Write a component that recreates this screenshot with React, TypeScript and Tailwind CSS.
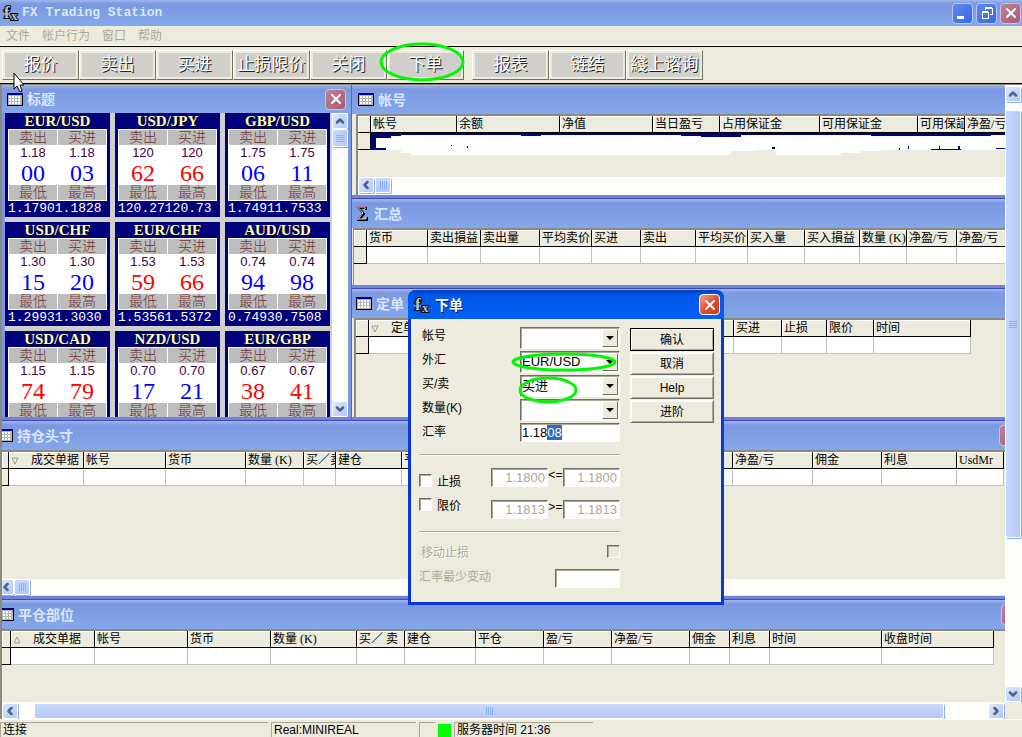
import React, { useEffect, useRef } from "react";
import { ChevronDown, ChevronLeft, ChevronRight, ChevronUp, X } from "lucide-react";

type Column = { label: string; width: number; sort?: "up" | "down" };

const accountColumns: Column[] = [
  { label: "", width: 13 },
  { label: "帐号", width: 86 },
  { label: "余额", width: 103 },
  { label: "净值", width: 93 },
  { label: "当日盈亏", width: 67 },
  { label: "占用保证金", width: 100 },
  { label: "可用保证金", width: 98 },
  { label: "可用保証金", width: 47 },
  { label: "净盈/亏", width: 60 },
];

const summaryColumns: Column[] = [
  { label: "", width: 13 },
  { label: "货币", width: 61 },
  { label: "卖出損益", width: 53 },
  { label: "卖出量", width: 59 },
  { label: "平均卖价", width: 52 },
  { label: "买进", width: 49 },
  { label: "卖出", width: 55 },
  { label: "平均买价", width: 52 },
  { label: "买入量", width: 57 },
  { label: "买入損益", width: 55 },
  { label: "数量 (K)", width: 47 },
  { label: "净盈/亏", width: 50 },
  { label: "净盈/亏", width: 60 },
];

const orderColumns: Column[] = [
  { label: "", width: 13 },
  { label: "定单", width: 365, sort: "down" },
  { label: "买进", width: 48 },
  { label: "止损", width: 45 },
  { label: "限价", width: 47 },
  { label: "时间", width: 97 },
];

const openColumns: Column[] = [
  { label: "", width: 7 },
  { label: "成交单据", width: 75, sort: "down" },
  { label: "帐号", width: 82 },
  { label: "货币", width: 80 },
  { label: "数量 (K)", width: 58 },
  { label: "买／卖", width: 32 },
  { label: "建仓", width: 66 },
  { label: "平仓", width: 331 },
  { label: "净盈/亏", width: 80 },
  { label: "佣金", width: 69 },
  { label: "利息", width: 75 },
  { label: "UsdMr", width: 47 },
];

const closedColumns: Column[] = [
  { label: "", width: 9 },
  { label: "成交单据", width: 84, sort: "up" },
  { label: "帐号", width: 93 },
  { label: "货币", width: 83 },
  { label: "数量 (K)", width: 86 },
  { label: "买／ 卖", width: 48 },
  { label: "建仓", width: 71 },
  { label: "平仓", width: 68 },
  { label: "盈/亏", width: 68 },
  { label: "净盈/亏", width: 78 },
  { label: "佣金", width: 40 },
  { label: "利息", width: 40 },
  { label: "时间", width: 112 },
  { label: "收盘时间", width: 112 },
];

const quotes = [
  { pair: "EUR/USD", base: "1.18", sell: "00", buy: "03", low: "1.1790", high: "1.1828", up: true },
  { pair: "USD/JPY", base: "120", sell: "62", buy: "66", low: "120.27", high: "120.73", up: false },
  { pair: "GBP/USD", base: "1.75", sell: "06", buy: "11", low: "1.7491", high: "1.7533", up: true },
  { pair: "USD/CHF", base: "1.30", sell: "15", buy: "20", low: "1.2993", high: "1.3030", up: true },
  { pair: "EUR/CHF", base: "1.53", sell: "59", buy: "66", low: "1.5356", high: "1.5372", up: false },
  { pair: "AUD/USD", base: "0.74", sell: "94", buy: "98", low: "0.7493", high: "0.7508", up: true },
  { pair: "USD/CAD", base: "1.15", sell: "74", buy: "79", low: "", high: "", up: false },
  { pair: "NZD/USD", base: "0.70", sell: "17", buy: "21", low: "", high: "", up: true },
  { pair: "EUR/GBP", base: "0.67", sell: "38", buy: "41", low: "", high: "", up: false },
];

const sunken =
  "border border-t-[#716f64] border-l-[#716f64] border-r-white border-b-white bg-white shadow-[inset_1px_1px_0_#aca899]";

const FxLogo = () => (
  <svg className="h-[18px] w-[18px] shrink-0" viewBox="0 0 18 18" aria-hidden="true">
    <g
      fill="#c0c0c0"
      stroke="#000"
      strokeWidth="2"
      paintOrder="stroke"
      fontFamily="Liberation Serif, serif"
      fontWeight="700"
    >
      <text x="2" y="14" fontSize="17">f</text>
      <text x="9" y="16" fontSize="13">x</text>
    </g>
    <path d="M1 10h7" stroke="#c0c0c0" />
  </svg>
);

const GridIcon = () => (
  <svg className="h-[13px] w-4 shrink-0" viewBox="0 0 16 13" shapeRendering="crispEdges" aria-hidden="true">
    <rect width="16" height="13" fill="#000" />
    <rect width="16" height="2" fill="#00007b" />
    <rect x="1" y="2" width="14" height="10" fill="#b5b5b5" />
    {[2, 5, 8, 11].map((x) =>
      [3, 6, 9].map((y) => <rect key={`${x}-${y}`} x={x} y={y} width="2" height="2" fill="#fff" />)
    )}
  </svg>
);

const SigmaIcon = () => (
  <svg className="h-4 w-3 shrink-0" viewBox="0 0 12 16" fill="none" aria-hidden="true">
    <path d="M10 4V2H3l5 6-5 6h8v-3" stroke="#000" strokeWidth="2" />
    <path d="M9 3V1H2l5 6-5 6h8v-2" stroke="#d8d8d8" strokeWidth="1" />
    <path d="M10 1H1l1 1M6 8l-5 5" stroke="#e8316a" strokeWidth="1" />
  </svg>
);

const arrows = { up: ChevronUp, down: ChevronDown, left: ChevronLeft, right: ChevronRight };

const ArrowButton = ({ dir }: { dir: keyof typeof arrows }) => {
  const Icon = arrows[dir];
  return (
    <button
      aria-label={`scroll ${dir}`}
      className="flex h-4 w-4 shrink-0 items-center justify-center rounded-xs border border-white bg-linear-to-br from-[#dfe8ff] to-[#b0c8f7] shadow-[1px_1px_0_#8fb0e8]"
    >
      <Icon className="h-3 w-3 shrink-0 text-[#4d6185]" strokeWidth={5} />
    </button>
  );
};

const Thumb = ({ vertical, className }: { vertical?: boolean; className: string }) => (
  <div
    className={`flex items-center justify-center rounded-xs border border-white shadow-[1px_1px_0_#8fb0e8] ${
      vertical
        ? "w-4 bg-linear-to-r from-[#c8d8fd] to-[#b5c9f8]"
        : "h-4 bg-linear-to-b from-[#c8d8fd] to-[#b5c9f8]"
    } ${className}`}
  >
    <div className={`flex gap-px ${vertical ? "flex-col" : ""}`}>
      {[0, 1, 2, 3].map((i) => (
        <span key={i} className={`bg-[#8cb0f8] ${vertical ? "h-px w-2" : "h-2 w-px"}`} />
      ))}
    </div>
  </div>
);

const CloseButton = ({ active, className = "" }: { active?: boolean; className?: string }) => (
  <button
    aria-label="关闭窗口"
    className={`flex h-[21px] w-[21px] shrink-0 items-center justify-center rounded-sm border ${
      active
        ? "border-white bg-linear-to-br from-[#f0a088] via-[#e05030] to-[#c83810]"
        : "border-[#d0c0e8] bg-linear-to-br from-[#c08098] to-[#a85c74]"
    } ${className}`}
  >
    <X className="h-4 w-4 text-white" strokeWidth={3} />
  </button>
);

const Pane = ({
  title,
  icon,
  children,
  className = "",
  barClass = "",
  close,
}: {
  title: string;
  icon: React.ReactNode;
  children: React.ReactNode;
  className?: string;
  barClass?: string;
  close?: React.ReactNode;
}) => (
  <section className={`flex flex-col overflow-hidden ${className}`}>
    <div
      className={`flex h-[29px] shrink-0 items-center overflow-hidden bg-linear-to-b from-[#a0b8f0] via-[#7b98e0] via-15% to-[#84a8ea] ${barClass}`}
    >
      {icon}
      <h2 className="grow text-sm leading-5 font-bold text-[#dbe6fd]">{title}</h2>
      {close}
    </div>
    {children}
    <div className="h-1 shrink-0 border-b border-[#4048b8] bg-[#6f83da]" />
  </section>
);

const DataTable = ({ columns, selected }: { columns: Column[]; selected?: boolean }) => (
  <table
    className="table-fixed border-separate border-spacing-0 font-['Liberation_Serif','Noto_Sans_CJK_SC',sans-serif] text-xs"
    style={{ width: columns.reduce((sum, c) => sum + c.width, 0) }}
  >
    <colgroup>
      {columns.map((c, i) => (
        <col key={i} style={{ width: c.width }} />
      ))}
    </colgroup>
    <thead>
      <tr>
        {columns.map((c, i) => (
          <th
            key={i}
            className="h-[17px] overflow-hidden border-r border-b border-black bg-[#ecebde] p-0 pl-0.5 text-left leading-4 font-normal whitespace-nowrap shadow-[inset_1px_1px_0_#fff]"
          >
            {c.sort && (
              <svg className="mr-3 inline-block h-2 w-2" viewBox="0 0 8 8" fill="none" stroke="#9c9a8c" aria-hidden="true">
                <path d={c.sort === "down" ? "M1 1h6L4 7z" : "M1 7h6L4 1z"} />
              </svg>
            )}
            {c.label}
          </th>
        ))}
      </tr>
    </thead>
    <tbody>
      <tr>
        {columns.map((_, i) => (
          <td
            key={i}
            className={`h-[17px] border-r border-b p-0 ${
              i === 0
                ? "border-black bg-[#ecebde]"
                : selected
                  ? "border-[#00007b] bg-[#00007b]"
                  : "border-[#c0c0c0] bg-white"
            }`}
          />
        ))}
      </tr>
    </tbody>
  </table>
);

const QuoteCard = ({ quote }: { quote: (typeof quotes)[number] }) => (
  <article className="flex h-[104px] w-[105px] flex-col bg-[#00007b] px-[3px]">
    <h3 className="text-center font-['Liberation_Serif',serif] text-[15px] leading-4 font-bold text-[#ffffb5] [text-shadow:1px_1px_0_#000]">
      {quote.pair}
    </h3>
    <div className="grid grid-cols-2 gap-x-px border border-white bg-white text-center">
      <span className="h-[15px] bg-[#bdbdbd] text-sm leading-[15px] font-light text-[#6b3131]">卖出</span>
      <span className="h-[15px] bg-[#bdbdbd] text-sm leading-[15px] font-light text-[#6b3131]">买进</span>
      <span className="text-[13px] leading-4 text-[#420042]">{quote.base}</span>
      <span className="text-[13px] leading-4 text-[#420042]">{quote.base}</span>
      {[quote.sell, quote.buy].map((value, i) => (
        <span
          key={i}
          className={`font-['Liberation_Serif',serif] text-2xl leading-6 ${quote.up ? "text-[#0000ff]" : "text-[#ff0000]"}`}
        >
          {value}
        </span>
      ))}
      <span className="h-[15px] bg-[#bdbdbd] text-sm leading-[15px] font-light text-[#6b3131]">最低</span>
      <span className="h-[15px] bg-[#bdbdbd] text-sm leading-[15px] font-light text-[#6b3131]">最高</span>
    </div>
    <div className="flex font-['Liberation_Mono',monospace] text-[13px] leading-4 text-white">
      <span>{quote.low}</span>
      <span>{quote.high}</span>
    </div>
  </article>
);

const ToolButton = ({ label, className = "" }: { label: string; className?: string }) => (
  <button
    className={`h-[30px] w-[77px] shrink-0 border border-t-white border-r-[#716f64] border-b-[#716f64] border-l-white bg-[#ecebde] p-0.5 ${className}`}
  >
    <span className="flex h-full items-center justify-center bg-[#d0cfcb] text-[17px] leading-6 whitespace-nowrap text-white [text-shadow:1px_1px_0_#222]">
      {label}
    </span>
  </button>
);

const DialogSelect = ({ id, label, value }: { id: string; label: string; value: string }) => (
  <div className="flex h-6 justify-between">
    <label htmlFor={id} className="pl-[3px] leading-[18px]">{label}</label>
    <div className={`grid h-[22px] w-[100px] grid-cols-1 p-px ${sunken}`}>
      <select id={id} defaultValue={value} className="col-start-1 row-start-1 w-full appearance-none text-[13px] outline-none">
        <option value={value}>{value}</option>
      </select>
      <span className="pointer-events-none col-start-1 row-start-1 flex w-4 items-center justify-center justify-self-end border border-t-white border-r-[#716f64] border-b-[#716f64] border-l-white bg-[#ecebde]">
        <span className="border-x-4 border-t-4 border-x-transparent border-t-black" />
      </span>
    </div>
  </div>
);

const LimitRow = ({ id, label, op, value }: { id: string; label: string; op: string; value: string }) => (
  <div className="flex h-8 items-start">
    <input
      id={id}
      type="checkbox"
      className={`h-[13px] w-[13px] appearance-none ${id === "stop" ? "mt-1.5" : "-mt-0.5"} ${sunken}`}
    />
    <label htmlFor={id} className={`ml-[5px] grow leading-5 ${id === "stop" ? "mt-1" : "-mt-1"}`}>{label}</label>
    <input aria-label={`${label}最小`} disabled defaultValue={value} className={`h-[19px] w-[57px] pr-0.5 text-right text-[13px] text-[#aca899] ${sunken}`} />
    <span className="w-[15px] text-center font-['Liberation_Mono',monospace] leading-4">{op}</span>
    <input aria-label={`${label}最大`} disabled defaultValue={value} className={`h-[19px] w-[57px] pr-0.5 text-right text-[13px] text-[#aca899] ${sunken}`} />
  </div>
);

const OrderDialog = () => {
  const rateRef = useRef<HTMLInputElement>(null);

  useEffect(() => {
    rateRef.current?.focus();
    rateRef.current?.setSelectionRange(4, 6);
  }, []);

  return (
    <div
      role="dialog"
      aria-label="下单"
      className="absolute top-[290px] left-[408px] w-[316px] rounded-t-lg border-[3px] border-t-0 border-[#0a36d8] bg-[#ecebde]"
    >
      <div className="-mx-[3px] flex h-[29px] items-center gap-1 rounded-t-lg bg-linear-to-b from-[#0040c0] via-[#0058e8] via-20% to-[#0060f8] pr-1 pl-[5px]">
        <FxLogo />
        <h2 className="grow text-sm leading-5 font-bold text-white [text-shadow:1px_1px_0_#002070]">下单</h2>
        <CloseButton active />
      </div>
      <form className="flex gap-2.5 pt-2 pr-[7px] pb-3.5 pl-2 text-xs">
        <div className="w-[201px] shrink-0">
          <DialogSelect id="account" label="帐号" value="" />
          <DialogSelect id="symbol" label="外汇" value="EUR/USD" />
          <DialogSelect id="side" label="买/卖" value="买进" />
          <DialogSelect id="amount" label="数量(K)" value="" />
          <div className="flex justify-between">
            <label htmlFor="rate" className="pl-[3px] leading-[18px]">汇率</label>
            <input
              ref={rateRef}
              id="rate"
              defaultValue="1.1808"
              className={`h-[19px] w-[100px] pl-px text-[13px] outline-none selection:bg-[#316ac5] selection:text-white ${sunken}`}
            />
          </div>
          <hr className="mt-3 mb-3 border-t border-b border-t-[#aca899] border-b-white" />
          <LimitRow id="stop" label="止损" op="<=" value="1.1800" />
          <LimitRow id="limit" label="限价" op=">=" value="1.1813" />
          <hr className="mb-3 -mt-px border-t border-b border-t-[#aca899] border-b-white" />
          <div className="flex h-6 items-start justify-between text-[#aca899]">
            <label htmlFor="trail" className="pl-0.5 leading-4 [text-shadow:1px_1px_0_#fff]">移动止损</label>
            <input id="trail" type="checkbox" disabled className={`h-[13px] w-[13px] appearance-none bg-[#ecebde]! ${sunken}`} />
          </div>
          <div className="flex justify-between text-[#aca899]">
            <label htmlFor="step" className="leading-4">汇率最少变动</label>
            <input id="step" disabled className={`h-[19px] w-[65px] ${sunken}`} />
          </div>
        </div>
        <div className="flex grow flex-col gap-px pt-px">
          {["确认", "取消", "Help", "进阶"].map((label, i) => (
            <button
              key={label}
              type="button"
              className={`h-[23px] border leading-5 shadow-[inset_1px_1px_0_#fff,inset_-1px_-1px_0_#aca899] ${
                i === 0 ? "border-black" : "border-t-white border-r-[#716f64] border-b-[#716f64] border-l-white"
              }`}
            >
              {label}
            </button>
          ))}
        </div>
      </form>
      <svg className="pointer-events-none absolute top-[60px] left-[98px] h-[56px] w-[112px]" viewBox="0 0 112 56" fill="none" stroke="#00f700" strokeWidth="3" aria-hidden="true">
        <ellipse cx="55" cy="12" rx="51" ry="8" />
        <ellipse cx="39" cy="40" rx="28" ry="12" />
      </svg>
    </div>
  );
};

const captionButton =
  "flex h-[21px] w-[21px] items-center justify-center rounded-sm border border-[#b8c8f4] bg-linear-to-br from-[#6088f0] to-[#3868e0]";

const App = () => {
  return (
    <div className="relative flex min-h-screen w-full flex-col overflow-hidden bg-[#ecebde] font-['Liberation_Sans','Noto_Sans_CJK_SC',sans-serif] text-xs text-black">
      <header className="flex h-[26px] items-center gap-0.5 bg-linear-to-b from-[#a0b8f0] via-[#7b98e0] via-15% to-[#84a8ea] pr-px pl-0.5">
        <FxLogo />
        <h1 className="grow font-['Liberation_Mono',monospace] text-[13px] font-bold text-[#dbe6fd]">FX Trading Station</h1>
        <button aria-label="最小化" className={captionButton}>
          <span className="mt-2 mr-1 h-[3px] w-[7px] bg-white" />
        </button>
        <button aria-label="还原" className={`${captionButton} mx-px`}>
          <svg className="h-3 w-3" viewBox="0 0 12 12" fill="none" stroke="#fff" shapeRendering="crispEdges" aria-hidden="true">
            <path d="M4 3V1h7v6H9" />
            <path d="M4 1h7" strokeWidth="2" />
            <path d="M1 5h6v6H1z" />
            <path d="M1 5h6" strokeWidth="2" />
          </svg>
        </button>
        <CloseButton />
      </header>
      <nav className="flex h-5 items-center gap-3 border-b border-white pl-1.5 text-[#aca899]">
        {["文件", "帐户行为", "窗口", "帮助"].map((item) => (
          <button key={item}>{item}</button>
        ))}
      </nav>
      <div className="flex h-[38px] items-center border-t border-b border-black pl-0.5">
        {["报价", "卖出", "买进", "止损限价", "关闭", "下单"].map((label) => (
          <ToolButton key={label} label={label} />
        ))}
        <ToolButton label="报表" className="ml-2" />
        <ToolButton label="链结" />
        <ToolButton label="綫上谘询" />
      </div>

      <main className="flex grow border-t border-l-2 border-[#8c8a7c]">
        <div className="flex min-w-0 grow flex-col">
          <div className="flex">
            <Pane
              title="标题"
              icon={<GridIcon />}
              barClass="h-7! gap-1 pl-[5px] pr-[5px]"
              close={<CloseButton />}
              className="w-[349px] shrink-0"
            >
              <div className="flex h-[304px] justify-between overflow-hidden border-x-[3px] border-[#7b98e0] bg-[#d0cfcb]">
                <div className="grid grid-cols-3 content-start gap-[5px]">
                  {quotes.map((quote) => (
                    <QuoteCard key={quote.pair} quote={quote} />
                  ))}
                </div>
                <div className="flex w-4 flex-col bg-[#fdfdfa]">
                  <ArrowButton dir="up" />
                  <Thumb vertical className="h-[18px]" />
                  <div className="mt-auto">
                    <ArrowButton dir="down" />
                  </div>
                </div>
              </div>
            </Pane>

            <div className="flex min-w-0 grow flex-col border-l border-[#5560c8]">
              <Pane title="帐号" icon={<GridIcon />} barClass="gap-1 pl-1.5">
                <div className="relative ml-1 flex h-[81px] flex-col overflow-hidden border-t-2 border-l-2 border-[#8c8a7c] bg-[#ecebde]">
                  <DataTable columns={accountColumns} selected />
                  <svg className="absolute top-[17px] left-[13px] h-6 w-[640px]" viewBox="0 0 640 24" shapeRendering="crispEdges" aria-hidden="true">
                    <path
                      fill="#fdfffc"
                      d="M5 5H20V3H30V2H150V3H170V2H310V3H330V4H370V2H500V3H620V2H640V17H590V16H560V17H510V18H490V20H470V22H405V17H385V18H360V22H40V20H30V17H15V15H5z"
                    />
                    <path fill="#00007b" d="M96 13h1v2h-1zM80 12h1v1h-1zM401 14h3v2h-3zM528 15h1v2h-1zM537 13h1v3h-1zM568 13h1v3h-1zM587 13h2v3h-2zM625 15h15v1h-15z" />
                  </svg>
                  <div className="mt-auto flex h-[18px] bg-[#fdfdfa]">
                    <ArrowButton dir="left" />
                    <Thumb className="ml-px w-4" />
                  </div>
                </div>
              </Pane>
              <Pane title="汇总" icon={<SigmaIcon />} barClass="gap-1.5 pl-1">
                <div className="ml-px h-[57px] overflow-hidden border-t-2 border-l border-[#8c8a7c] bg-[#ecebde]">
                  <DataTable columns={summaryColumns} />
                </div>
              </Pane>
              <Pane title="定单" icon={<GridIcon />} barClass="gap-1 pl-1" className="grow">
                <div className="ml-0.5 grow overflow-hidden border-t-2 border-l-2 border-[#8c8a7c] bg-[#ecebde]">
                  <DataTable columns={orderColumns} />
                </div>
              </Pane>
            </div>
          </div>

          <Pane
            title="持仓头寸"
            icon={<GridIcon />}
            barClass="gap-1 -ml-1.5 pl-px"
            close={<CloseButton className="-mr-[15px]" />}
          >
            <div className="flex h-[146px] flex-col overflow-hidden border-t-2 border-[#8c8a7c] bg-[#ecebde]">
              <DataTable columns={openColumns} />
              <div className="mt-auto mb-px flex h-4 bg-[#fdfdfa]">
                <div className="-ml-1">
                  <ArrowButton dir="left" />
                </div>
                <Thumb className="w-4" />
              </div>
            </div>
          </Pane>

          <section className="flex grow flex-col overflow-hidden">
            <div className="-ml-1 flex h-[29px] shrink-0 items-center gap-1 overflow-hidden bg-linear-to-b from-[#a0b8f0] via-[#7b98e0] via-15% to-[#84a8ea]">
              <GridIcon />
              <h2 className="grow text-sm leading-5 font-bold text-[#dbe6fd]">平仓部位</h2>
              <CloseButton className="-mr-[17px]" />
            </div>
            <div className="grow overflow-hidden border-t-2 border-[#8c8a7c]">
              <DataTable columns={closedColumns} />
            </div>
          </section>

          <div className="flex h-[17px] items-center bg-[#fdfdfa]">
            <ArrowButton dir="left" />
            <Thumb className="ml-4 grow" />
            <div className="mr-px ml-11">
              <ArrowButton dir="right" />
            </div>
          </div>
        </div>

        <div className="flex w-[17px] shrink-0 flex-col bg-[#fdfdfa] pt-px">
          <ArrowButton dir="up" />
          <Thumb vertical className="mt-2 grow" />
          <div className="mt-37">
            <ArrowButton dir="down" />
          </div>
          <div className="h-[17px] bg-[#ecebde]" />
        </div>
      </main>

      <footer className="flex h-[18px] shrink-0 items-end gap-[3px] overflow-hidden border-t border-white leading-[15px]">
        <span className="h-[15px] w-[268px] border-t border-l border-[#aca899] pl-0.5">连接</span>
        <span className="h-[15px] w-[145px] border-t border-l border-[#aca899] pl-0.5">Real:MINIREAL</span>
        <span className="h-[15px] w-4 border-t border-l border-[#aca899]" />
        <span className="h-[13px] w-[13px] bg-[#00ff00]" />
        <span className="h-[15px] w-[139px] border-t border-l border-[#aca899] pl-0.5">服务器时间 21:36</span>
      </footer>

      <OrderDialog />

      <svg className="pointer-events-none absolute top-10 left-[378px] h-11 w-[88px]" viewBox="0 0 88 44" fill="none" stroke="#00f700" strokeWidth="3" aria-hidden="true">
        <ellipse cx="44" cy="22" rx="41" ry="18" />
      </svg>
      <svg className="pointer-events-none absolute top-[72px] left-[13px] h-[21px] w-3" viewBox="0 0 12 21" fill="#fff" stroke="#000" aria-hidden="true">
        <path d="M1 1v16l3-3 3 6 2-1-2-6h4z" />
      </svg>
    </div>
  );
};

export default App;
